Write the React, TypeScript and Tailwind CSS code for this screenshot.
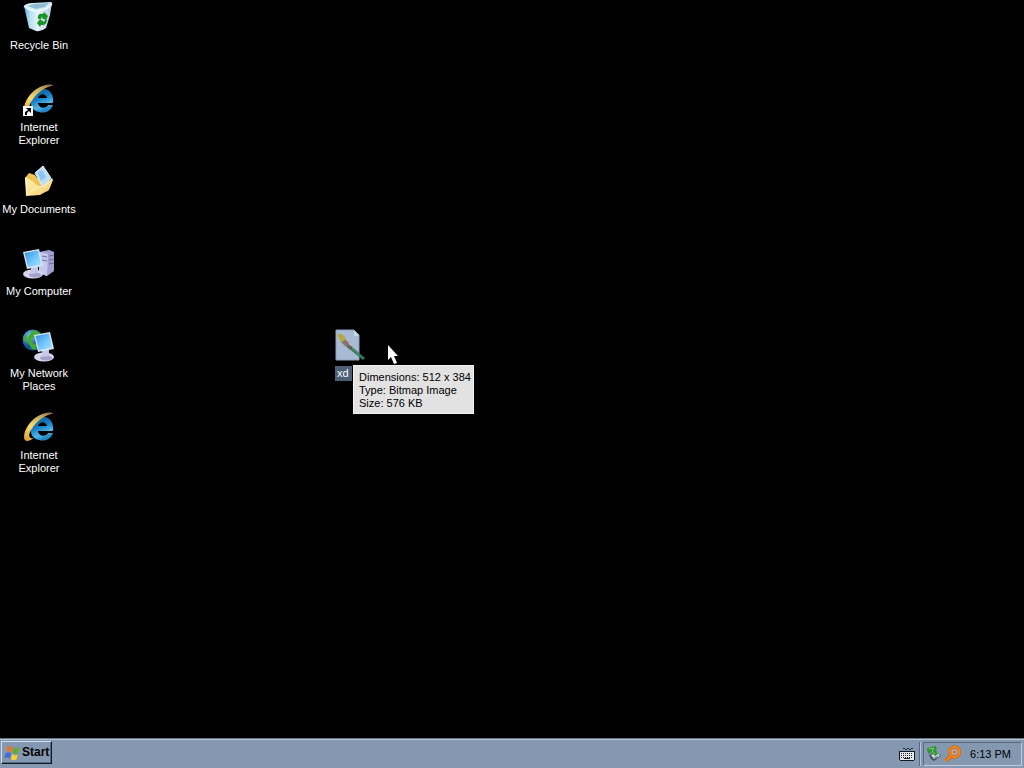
import type { ReactNode } from "react";

function RecycleBinIcon() {
  return (
    <svg viewBox="0 0 32 32" className="h-8 w-8 shrink-0 overflow-visible" aria-hidden="true">
      <defs>
        <linearGradient id="bin" x1="0" x2="1">
          <stop offset="0" stopColor="#58a9d8" />
          <stop offset="0.2" stopColor="#b4def0" />
          <stop offset="0.5" stopColor="#e9f5fa" />
          <stop offset="1" stopColor="#b2cfe4" />
        </linearGradient>
      </defs>
      <path d="M1 4 L12 9 L29 1 L27 13 L23 26 Q18 30 13 29 L6 26Z" fill="url(#bin)" />
      <path d="M1 4 Q3 1 10 1 L28 0 Q30 1 28 3 Q25 8 14 9 Q6 9 1 4Z" fill="#d4edf5" />
      <path d="M5 4 L11 2 L26 1 L22 5 L13 7Z" fill="#8dbdd5" />
      <path d="M1 4 Q6 9 14 9 Q25 8 29 2" fill="none" stroke="#f4fcff" strokeWidth="1.2" />
      <path d="M15 17 Q14 11 20 12 L21 10 L25 14 L23 18 L18 16 L20 15 Q18 14 18 17Z" fill="#169424" />
      <path d="M24 17 Q24 24 18 23 L17 25 L14 21 L17 17 L21 20 L19 21 Q21 21 22 18Z" fill="#169424" />
    </svg>
  );
}

function ExplorerIcon({ shortcut = false }: { shortcut?: boolean }) {
  const id = shortcut ? "ie-a" : "ie-b";
  return (
    <svg viewBox="0 0 32 32" className="h-8 w-8 shrink-0 overflow-visible" aria-hidden="true">
      <defs>
        <linearGradient id={id} x1="0" y1="0" x2="0.4" y2="1">
          <stop offset="0" stopColor="#0b4f88" />
          <stop offset="0.5" stopColor="#187fc5" />
          <stop offset="0.8" stopColor="#4eb6ec" />
          <stop offset="1" stopColor="#2584c4" />
        </linearGradient>
        <linearGradient id={`${id}-ring`} x1="0" y1="1" x2="1" y2="0">
          <stop offset="0" stopColor="#d99130" />
          <stop offset="0.35" stopColor="#f6dc6e" />
          <stop offset="0.65" stopColor="#c8b45f" />
          <stop offset="1" stopColor="#9b6840" />
        </linearGradient>
      </defs>
      <path fillRule="evenodd" d="M19 5 C27 4 31 11 30 19 L15 19 C16 25 23 25 25 21 L30 21 C28 27 22 30 16 28 C10 27 7 22 8 16 C9 10 13 6 19 5Z M15 14 L24 14 C23 9 16 9 15 14Z" fill={`url(#${id})`} />
      <path d="M31 8 C34 -1 25 -1 17 3 C7 8 1 18 1 25 C1 30 5 30 11 26 C7 27 5 25 7 20 C11 11 22 3 28 2 C32 1 32 4 31 8Z" fill={`url(#${id}-ring)`} />
      {shortcut && (
        <g>
          <path d="M0 22H10V32H0Z" fill="#fff" />
          <path d="M3 24H8V29L6 27L4 29V31H2V28L5 26Z" fill="#000" />
        </g>
      )}
    </svg>
  );
}

function DocumentsIcon() {
  return (
    <svg viewBox="0 0 32 32" className="h-8 w-8 shrink-0 overflow-visible" aria-hidden="true">
      <defs>
        <linearGradient id="folder" x1="0" y1="0" x2="1" y2="1">
          <stop offset="0" stopColor="#fff1ac" />
          <stop offset="0.65" stopColor="#f9dc89" />
          <stop offset="1" stopColor="#dfa644" />
        </linearGradient>
      </defs>
      <path d="M2 12 L6 7 L12 9 L14 12 L26 10 L25 25 L4 29Z" fill="#edc45a" />
      <path d="M12 7 L20 0 L28 12 L20 21Z" fill="#b9dff9" stroke="#e2f3ff" strokeWidth="1" />
      <path d="M15 7 L19 4 L23 11 L18 15Z" fill="#8fc2ec" />
      <path d="M2 11 L9 15 L15 20 L21 20 L29 12 L30 14 L26 24 L17 29 L3 30Z" fill="url(#folder)" />
      <path d="M4 29 L14 21 L21 20 L29 13" fill="none" stroke="#fff3ba" />
      <path d="M3 12 L4 29" stroke="#fff5bd" />
    </svg>
  );
}

function MonitorShape() {
  return (
    <g>
      <ellipse cx="10" cy="26" rx="10" ry="4.5" fill="#d7d6ec" />
      <ellipse cx="12" cy="27" rx="6" ry="2.5" fill="#a5a1ca" />
      <path d="M8 18 L15 18 L15 25 L8 26Z" fill="#c6c6e5" />
      <path d="M0 4 L16 1 L20 18 L4 21Z" fill="#d5e3f7" />
      <path d="M1.5 5 L15 2.5 L18 16.5 L5 19Z" fill="url(#screen)" />
    </g>
  );
}

function ScreenGradient() {
  return (
    <defs>
      <linearGradient id="screen" x1="0" y1="0" x2="1" y2="1">
        <stop offset="0" stopColor="#348dda" />
        <stop offset="0.55" stopColor="#72c6ff" />
        <stop offset="1" stopColor="#a8e3ff" />
      </linearGradient>
    </defs>
  );
}

function ComputerIcon() {
  return (
    <svg viewBox="0 0 32 32" className="h-8 w-8 shrink-0 overflow-visible" aria-hidden="true">
      <ScreenGradient />
      <path d="M16 4 L26 2 L31 4 L31 23 L24 28 L16 25Z" fill="#9fa2d0" />
      <path d="M16 4 L25 6 L24 28 L16 25Z" fill="#c6c9e9" />
      <path d="M19 8 L24 9 M19 12 L24 13 M26 8 L31 7 M26 12 L31 11 M26 16 L31 15" stroke="#6d6e9f" />
      <MonitorShape />
    </svg>
  );
}

function NetworkIcon() {
  return (
    <svg viewBox="0 0 32 32" className="h-8 w-8 shrink-0 overflow-visible" aria-hidden="true">
      <defs>
        <radialGradient id="globe" cx="0.35" cy="0.3">
          <stop offset="0" stopColor="#7bd1f3" />
          <stop offset="1" stopColor="#145296" />
        </radialGradient>
      </defs>
      <circle cx="10" cy="10" r="10.5" fill="url(#globe)" />
      <path d="M10 0 L16 2 L15 5 L11 7 L8 11 L10 13 L14 15 L13 20 L9 19 L6 14 L3 12 L5 7Z M1 7 L5 3 L3 10 L1 12Z M16 2 L20 7 L19 12 L14 9Z" fill="#45a936" />
      <g transform="translate(11 1)"><MonitorShape /></g>
    </svg>
  );
}

function BitmapIcon() {
  return (
    <svg viewBox="0 0 32 32" className="h-8 w-8 shrink-0" aria-hidden="true">
      <path d="M2 1 H20 L25 6 V31 H2Z" fill="#a9bad4" />
      <path d="M20 1 V7 H25Z" fill="#cad8e8" />
      <path d="M2 1 H20 L25 6 V31 H2Z" fill="none" stroke="#8fa2be" />
      <path d="M17 17 L31 29 L29 31 L13 18Z" fill="#347458" />
      <path d="M7 9 L18 18 L16 21 L7 12Z" fill="#686459" />
      <path d="M10 9 L15 14 L12 18 L7 13Z" fill="#8f746e" />
      <path d="M4 5 Q9 4 12 10 L8 13 Q4 10 4 5Z" fill="#b5a840" />
      <path d="M18 19 L25 26" stroke="#58a66d" />
    </svg>
  );
}

function WindowsLogo() {
  return (
    <svg viewBox="0 0 16 16" className="h-4 w-4 shrink-0" aria-hidden="true">
      <path d="M3 2 Q6 0 8.5 2 L7.5 7.5 Q4 5 2 7Z" fill="#e77539" />
      <path d="M9.5 2.5 Q12 4 15.5 2 L14 8.5 Q11 10 8.5 7.5Z" fill="#68aa30" />
      <path d="M1.5 8.5 Q5 6 7.2 8.5 L6 14 Q3 11.5 0 13.5Z" fill="#416fd5" />
      <path d="M8 9 Q11 11 13.8 9.5 L12.5 14.5 Q9 16 6.8 14Z" fill="#f5cf36" />
    </svg>
  );
}

function KeyboardIcon() {
  return (
    <svg viewBox="0 0 16 16" className="h-4 w-4" aria-hidden="true">
      <path d="M4 2.5H6M6 3.5H8M8 2.5H10M10 3.5H12M12 2.5H14" fill="none" stroke="#25303e" />
      <path d="M0 5H16V14H15V15H1V14H0Z" fill="#151b23" />
      <path d="M1 6H15V14H1Z" fill="#e6e8eb" />
      <path d="M2 7.5H14M2 9.5H14M2 11.5H14" stroke="#1f252e" strokeDasharray="1 1" />
      <path d="M5 12.5H11" stroke="#1f252e" />
    </svg>
  );
}

function SafelyRemoveIcon() {
  return (
    <svg viewBox="0 0 16 16" className="h-4 w-4" aria-hidden="true">
      <path d="M3 9 L10 5 L15 10 L8 15 L5 13Z" fill="#46545c" />
      <path d="M5 9 L11 6 L14 10 L8 13Z" fill="#d5dce0" />
      <path d="M8 12 L12 10" stroke="#657985" />
      <path d="M1 2 L10 0 L11 3 L9 4 L12 8 L9 10 L5 6 L2 8Z" fill="#2d9434" />
      <path d="M3 3 L8 2 L6 5 L9 8" fill="none" stroke="#85d166" />
    </svg>
  );
}

function SearchIcon() {
  return (
    <svg viewBox="0 0 18 18" className="h-[18px] w-[18px]" aria-hidden="true">
      <path d="M7 11 L2 16" stroke="#cd650e" strokeWidth="4" />
      <circle cx="10.5" cy="7" r="5" fill="#a6adb5" stroke="#cd650e" strokeWidth="3.5" />
      <circle cx="10.5" cy="7" r="5" fill="none" stroke="#f28624" strokeWidth="2" />
      <path d="M7 11 L2 16" stroke="#f28624" strokeWidth="2" />
      <circle cx="10.5" cy="7" r="1.5" fill="#df731a" />
    </svg>
  );
}

function Shortcut({ icon, label }: { icon: ReactNode; label: string }) {
  return (
    <button type="button" className="flex h-[82px] w-full flex-col items-center gap-[5px] text-center text-white">
      {icon}
      <span className="max-w-[74px]">{label}</span>
    </button>
  );
}

export default function App() {
  return (
    <div className="flex min-h-screen flex-col bg-black font-['Liberation_Sans',Arial,sans-serif] text-[11px] leading-[13px]">
      <main className="relative flex-1">
        <nav aria-label="Desktop" className="flex w-[78px] flex-col pt-[2px]">
          <Shortcut icon={<RecycleBinIcon />} label="Recycle Bin" />
          <Shortcut icon={<ExplorerIcon shortcut />} label="Internet Explorer" />
          <Shortcut icon={<DocumentsIcon />} label="My Documents" />
          <Shortcut icon={<ComputerIcon />} label="My Computer" />
          <Shortcut icon={<NetworkIcon />} label="My Network Places" />
          <Shortcut icon={<ExplorerIcon />} label="Internet Explorer" />
        </nav>

        <button type="button" aria-describedby="file-info" className="absolute left-[334px] top-[329px] flex flex-col items-start gap-[5px] text-white">
          <BitmapIcon />
          <span className="ml-px w-[17px] bg-[#4d5f77] py-px pl-[2px] text-left">xd</span>
        </button>

        <div id="file-info" role="tooltip" className="absolute left-[353px] top-[365px] whitespace-nowrap border border-[#f2f2f2] bg-[#e2e2e2] pb-[3px] pl-[5px] pr-[2px] pt-[5px] text-black">
          <p>Dimensions: 512 x 384</p>
          <p>Type: Bitmap Image</p>
          <p>Size: 576 KB</p>
        </div>

        <svg viewBox="0 0 12 20" className="absolute left-[387px] top-[345px] h-5 w-3" aria-hidden="true">
          <path d="M1 0 V15 L4 12 L7 19 L10 18 L7 11 H11Z" fill="#fff" />
        </svg>
      </main>

      <footer className="flex h-[30px] items-stretch justify-between border-t border-[#66748a] bg-[#8499b1] shadow-[inset_0_1px_0_#b5c3d3]">
        <div className="flex pb-1 pl-px pt-[2px]">
          <button type="button" className="flex items-center gap-[2px] border border-b-[#111820] border-l-[#d5e0eb] border-r-[#111820] border-t-[#d5e0eb] pl-[2px] pr-[2px] text-[12px] font-bold text-black shadow-[inset_-1px_-1px_0_#59697e]">
            <WindowsLogo />
            Start
          </button>
        </div>
        <div className="flex items-stretch gap-[3px] pb-[2px] pr-[2px] pt-[3px]">
          <div className="flex items-center border-r border-[#59697d] pr-1 shadow-[1px_0_0_#b4c2d3]">
            <button type="button" aria-label="Keyboard"><KeyboardIcon /></button>
          </div>
          <div className="flex items-center border border-b-[#c0ccda] border-l-[#5a6a7f] border-r-[#c0ccda] border-t-[#5a6a7f] pl-[2px] pr-[10px]">
            <button type="button" aria-label="Safely Remove Hardware" className="mr-[2px]"><SafelyRemoveIcon /></button>
            <button type="button" aria-label="Search" className="mr-2"><SearchIcon /></button>
            <time className="text-black">6:13 PM</time>
          </div>
        </div>
      </footer>
    </div>
  );
}
